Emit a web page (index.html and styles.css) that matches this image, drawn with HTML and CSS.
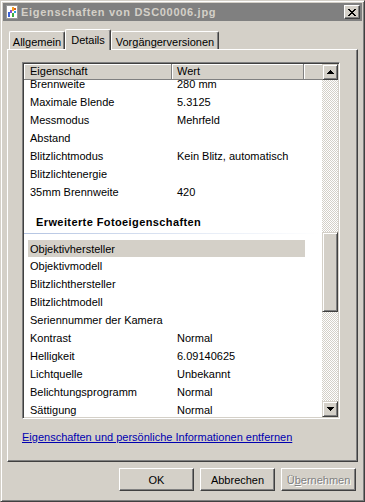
FILE: index.html
```html
<!DOCTYPE html>
<html lang="de">
  <head>
    <meta charset="UTF-8" />
    <title>Eigenschaften von DSC00006.jpg</title>
    <link rel="stylesheet" href="styles.css">
  </head>
  <body>
    <div class="window">
      <div class="titlebar">
        <svg class="app-icon" viewBox="0 0 16 16" width="16" height="16">
          <rect x="2.5" y="1.5" width="11" height="13" fill="#fff" stroke="#9a9a9a" />
          <rect x="4" y="8" width="2" height="5" fill="#3b62d6" />
          <rect x="6" y="6" width="2" height="3" fill="#8a4fd0" />
          <rect x="8" y="3" width="2" height="4" fill="#f0a020" />
          <rect x="10" y="4" width="2" height="2" fill="#e05a1c" />
          <rect x="8" y="9" width="2" height="4" fill="#3fae3f" />
          <rect x="10" y="7" width="2" height="2" fill="#2aa0d8" />
        </svg>
        <span class="title">Eigenschaften von DSC00006.jpg</span>
        <div class="close-btn">
          <svg viewBox="0 0 8 7" width="8" height="7" shape-rendering="crispEdges">
            <path d="M0 0h2v1H0zM6 0h2v1H6zM1 1h2v1H1zM5 1h2v1H5zM2 2h4v1H2zM3 3h2v1H3zM2 4h4v1H2zM1 5h2v1H1zM5 5h2v1H5zM0 6h2v1H0zM6 6h2v1H6z" fill="#000" />
          </svg>
        </div>
      </div>

      <div class="content">
        <div class="tabs">
          <div class="tab tab-general">Allgemein</div>
          <div class="tab tab-details active">Details</div>
          <div class="tab tab-versions">Vorgängerversionen</div>
        </div>

        <div class="panel">
          <div class="listview">
            <div class="list-main">
              <div class="list-header">
                <div class="hcell hcell-name">Eigenschaft</div>
                <div class="hcell hcell-value">Wert</div>
                <div class="hcell hcell-rest"></div>
              </div>
              <div class="list-body">
                <div class="rows">
                  <div class="row"><span>Brennweite</span><span>280 mm</span></div>
                  <div class="row"><span>Maximale Blende</span><span>5.3125</span></div>
                  <div class="row"><span>Messmodus</span><span>Mehrfeld</span></div>
                  <div class="row"><span>Abstand</span><span></span></div>
                  <div class="row"><span>Blitzlichtmodus</span><span>Kein Blitz, automatisch</span></div>
                  <div class="row"><span>Blitzlichtenergie</span><span></span></div>
                  <div class="row"><span>35mm Brennweite</span><span>420</span></div>
                  <div class="group">
                    <div class="group-title">Erweiterte Fotoeigenschaften</div>
                    <div class="group-line"></div>
                  </div>
                  <div class="row selected"><span>Objektivhersteller</span><span></span></div>
                  <div class="row"><span>Objektivmodell</span><span></span></div>
                  <div class="row"><span>Blitzlichthersteller</span><span></span></div>
                  <div class="row"><span>Blitzlichtmodell</span><span></span></div>
                  <div class="row"><span>Seriennummer der Kamera</span><span></span></div>
                  <div class="row"><span>Kontrast</span><span>Normal</span></div>
                  <div class="row"><span>Helligkeit</span><span>6.09140625</span></div>
                  <div class="row"><span>Lichtquelle</span><span>Unbekannt</span></div>
                  <div class="row"><span>Belichtungsprogramm</span><span>Normal</span></div>
                  <div class="row"><span>Sättigung</span><span>Normal</span></div>
                </div>
              </div>
            </div>
            <div class="scrollbar">
              <div class="sb-btn">
                <svg viewBox="0 0 7 4" width="7" height="4" shape-rendering="crispEdges">
                  <path d="M3 0h1v1H3zM2 1h3v1H2zM1 2h5v1H1zM0 3h7v1H0z" fill="#000" />
                </svg>
              </div>
              <div class="sb-track"><div class="sb-thumb"></div></div>
              <div class="sb-btn">
                <svg viewBox="0 0 7 4" width="7" height="4" shape-rendering="crispEdges">
                  <path d="M0 0h7v1H0zM1 1h5v1H1zM2 2h3v1H2zM3 3h1v1H3z" fill="#000" />
                </svg>
              </div>
            </div>
          </div>
          <a class="remove-link" href="#">Eigenschaften und persönliche Informationen entfernen</a>
        </div>

        <div class="buttons">
          <button class="btn">OK</button>
          <button class="btn">Abbrechen</button>
          <button class="btn disabled">Ü<u>b</u>ernehmen</button>
        </div>
      </div>
    </div>
  </body>
</html>
```

FILE: styles.css
```css
* {
  margin: 0;
  padding: 0;
  box-sizing: border-box;
}
body {
  background-color: #d4d0c8;
  font-family: "Liberation Sans", Arial, sans-serif;
  font-size: 11px;
  color: #000;
}
.window {
  width: 365px;
  height: 502px;
  border: 1px solid;
  border-color: #d4d0c8 #404040 #404040 #d4d0c8;
  box-shadow: inset 1px 1px #fff, inset -1px -1px #808080;
  padding: 2px;
  display: flex;
  flex-direction: column;
}
.titlebar {
  height: 18px;
  flex-shrink: 0;
  background-color: #808080;
  display: flex;
  align-items: center;
  padding: 0 2px 0 1px;
}
.app-icon {
  flex-shrink: 0;
}
.title {
  flex: 1;
  margin-left: 1px;
  color: #d4d0c8;
  font-weight: bold;
  letter-spacing: 0.7px;
  white-space: nowrap;
}
.close-btn {
  width: 16px;
  height: 14px;
  background-color: #d4d0c8;
  border: 1px solid;
  border-color: #fff #404040 #404040 #fff;
  box-shadow: inset -1px -1px #808080;
  display: flex;
  align-items: center;
  justify-content: center;
  padding-right: 1px;
}
.content {
  flex: 1;
  padding: 8px 4px 0;
  display: flex;
  flex-direction: column;
}

/* tabs */
.tabs {
  display: flex;
  align-items: flex-end;
  height: 20px;
  padding-left: 2px;
}
.tab {
  height: 18px;
  padding-top: 4px;
  line-height: 13px;
  text-align: center;
  white-space: nowrap;
  background-color: #d4d0c8;
  border-top: 1px solid #fff;
  border-left: 1px solid #fff;
  border-right: 1px solid #404040;
  box-shadow: inset -1px 0 #808080;
  border-radius: 2px 2px 0 0;
}
.tab-general {
  width: 56px;
}
.tab-details {
  width: 46px;
}
.tab-versions {
  width: 108px;
}
.tab.active {
  height: 21px;
  margin-bottom: -1px;
  position: relative;
  z-index: 1;
}

/* panel */
.panel {
  height: 413px;
  border: 1px solid;
  border-color: #fff #404040 #404040 #fff;
  box-shadow: inset -1px -1px #808080;
  padding: 12px 0 0 14px;
}
.listview {
  width: 318px;
  height: 357px;
  border: 1px solid;
  border-color: #808080 #fff #fff #808080;
  box-shadow: inset 1px 1px #404040, inset -1px -1px #d4d0c8;
  padding: 1px;
  background-color: #fff;
  display: flex;
}
.list-main {
  flex: 1;
  display: flex;
  flex-direction: column;
  overflow: hidden;
}
.list-header {
  height: 16px;
  flex-shrink: 0;
  display: flex;
  background-color: #d4d0c8;
}
.hcell {
  height: 16px;
  line-height: 15px;
  border-right: 1px solid #808080;
  border-bottom: 1px solid #808080;
  box-shadow: inset 1px 1px #fff;
  white-space: nowrap;
}
.hcell-name {
  width: 148px;
  padding-left: 6px;
}
.hcell-value {
  width: 132px;
  padding-left: 5px;
}
.hcell-rest {
  flex: 1;
  border-right: none;
}
.list-body {
  flex: 1;
  overflow: hidden;
}
.rows {
  margin-top: -5px;
}
.row {
  height: 18px;
  width: 277px;
  margin-left: 4px;
  display: grid;
  grid-template-columns: 147px 1fr;
  align-items: center;
  white-space: nowrap;
}
.row span {
  padding-left: 2px;
}
.row.selected {
  background-color: #d4d0c8;
  border-top: 1px solid #fff;
}
.group {
  height: 38px;
  padding: 14px 0 0 12px;
}
.group-title {
  font-weight: bold;
  letter-spacing: 0.4px;
  line-height: 14px;
}
.group-line {
  height: 1px;
  margin: 4px 0 0 -12px;
  background: linear-gradient(to right, #b4c4e2, #e6ecf6 60%, #fff);
}

/* scrollbar */
.scrollbar {
  width: 16px;
  display: flex;
  flex-direction: column;
}
.sb-btn,
.sb-thumb {
  background-color: #d4d0c8;
  border: 1px solid;
  border-color: #d4d0c8 #404040 #404040 #d4d0c8;
  box-shadow: inset 1px 1px #fff, inset -1px -1px #808080;
}
.sb-btn {
  height: 16px;
  flex-shrink: 0;
  display: flex;
  align-items: center;
  justify-content: center;
}
.sb-track {
  flex: 1;
  background: repeating-conic-gradient(#fff 0 25%, #d4d0c8 0 50%) 0 0 / 2px 2px;
}
.sb-thumb {
  height: 80px;
  margin-top: 152px;
}

.remove-link {
  display: block;
  width: max-content;
  margin-top: 12px;
  line-height: 13px;
  color: #0000b0;
  text-decoration: underline;
}

/* dialog buttons */
.buttons {
  display: flex;
  justify-content: flex-end;
  gap: 6px;
  margin-top: 6px;
  padding-right: 2px;
}
.btn {
  width: 75px;
  height: 23px;
  font: inherit;
  color: #000;
  background-color: #d4d0c8;
  border: 1px solid;
  border-color: #fff #404040 #404040 #fff;
  box-shadow: inset -1px -1px #808080;
}
.btn.disabled {
  color: #808080;
  text-shadow: 1px 1px #fff;
}
```
